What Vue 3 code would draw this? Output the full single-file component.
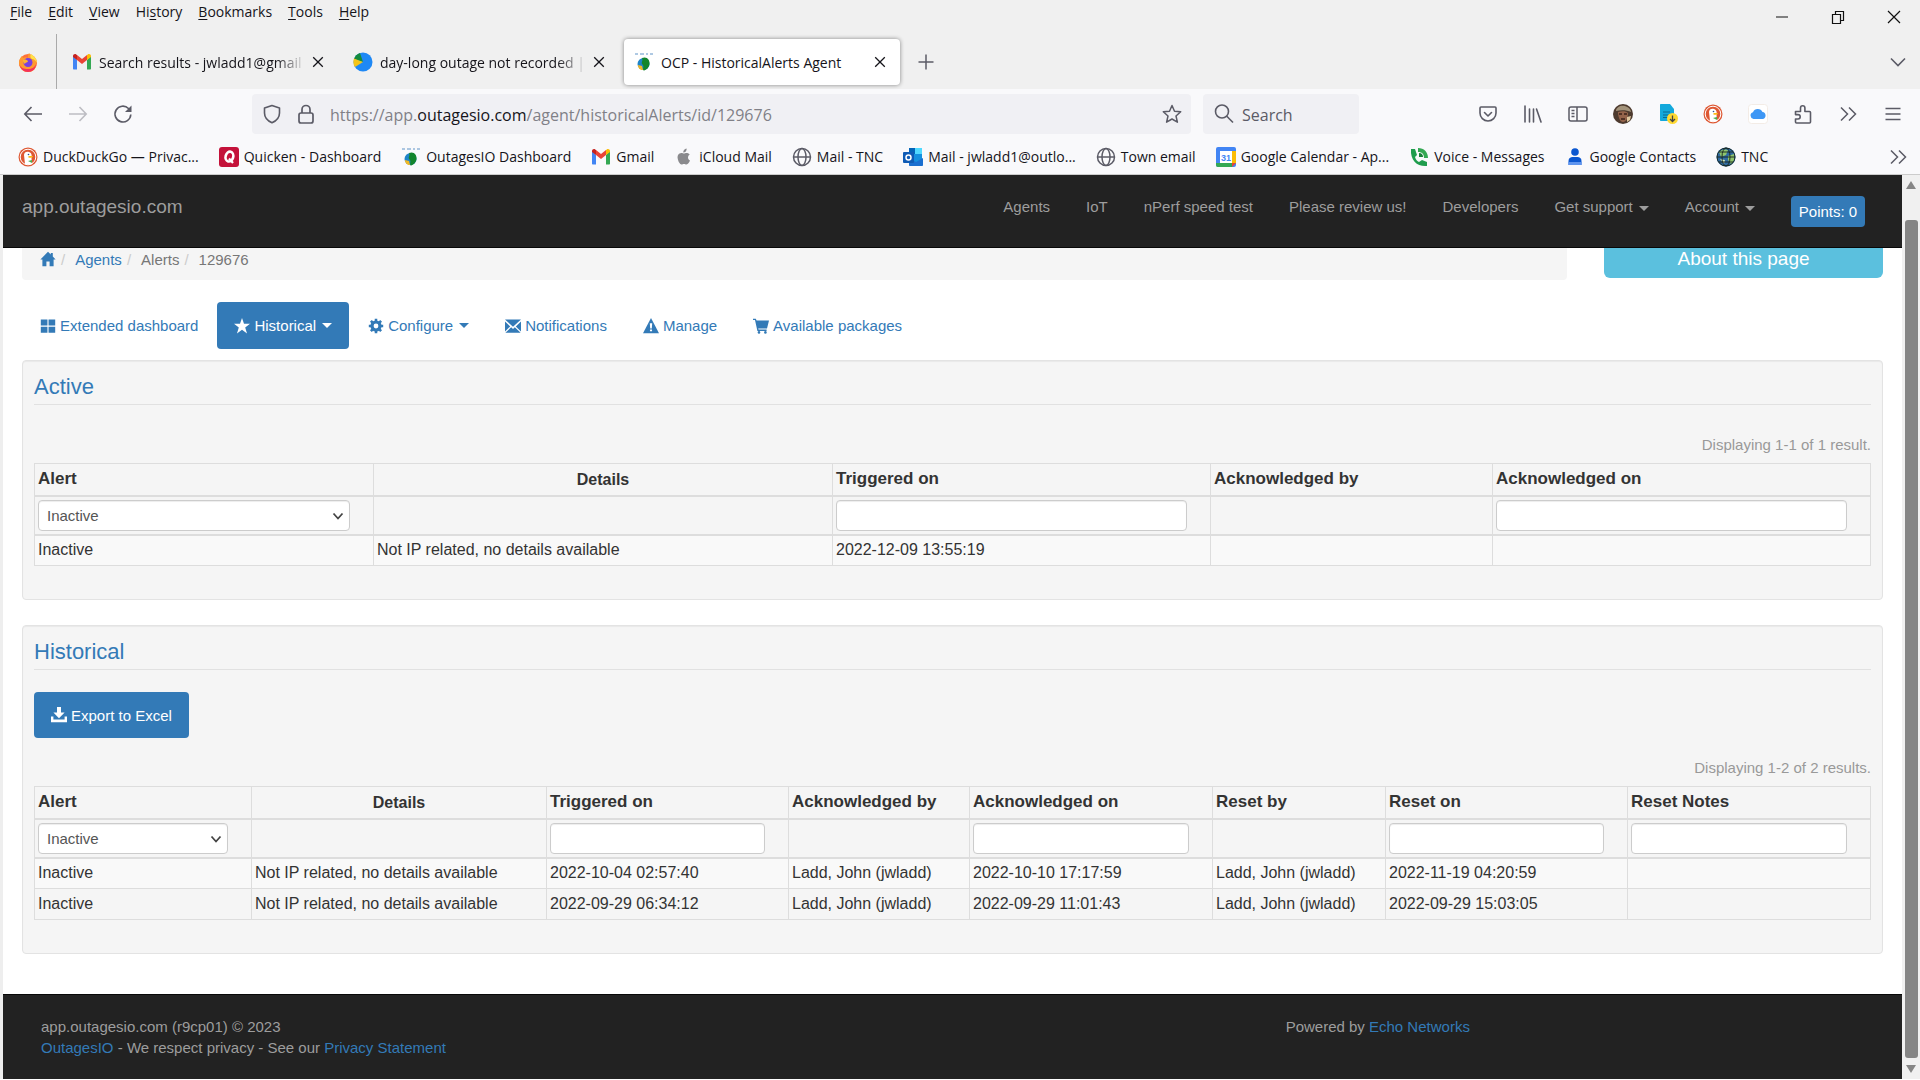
<script setup>
import { ref } from 'vue'

const menus = [
  ['', 'F', 'ile'], ['', 'E', 'dit'], ['', 'V', 'iew'], ['Hi', 's', 'tory'],
  ['', 'B', 'ookmarks'], ['', 'T', 'ools'], ['', 'H', 'elp'],
]

const art = {
  firefox: '<circle cx="10" cy="11" r="9" fill="#ff7139"/><path d="M11 1c1 2 4 3 6 6 3 5 1 13-7 13C4 20 1 15 1 11c0-3 1-5 3-7l1 2c2-1 4-1 5 0 0-2 0-3 1-5z" fill="#ff9a2e"/><path d="M13 2c3 2 6 5 6 9-1-2-3-4-5-4-2-1-2-3-1-5z" fill="#ffe14a"/><path d="M1 11c1 5 5 6 9 6s7-2 8-5c0 5-4 8-8 8s-8-3-9-9z" fill="#f5325b"/><circle cx="10" cy="10.500" r="4.500" fill="#7a3fe0"/><path d="M5 8c2-1 4 0 5 1 0 2-3 1-3 3-2-1-2-3-2-4z" fill="#ffb32e"/>',
  gmail: '<path d="M1 3.500v13c0 .6.400 1 1 1h3V8z" fill="#4285f4"/><path d="M19 3.500v13c0 .6-.400 1-1 1h-3V8z" fill="#34a853"/><path d="M15 8l4-3V4c0-1.800-2-2.600-3.200-1.600L15 3z" fill="#fbbc04"/><path d="M1 5l4 3V3l-.8-.6C3 1.400 1 2.200 1 4z" fill="#c5221f"/><path d="M5 3l5 4 5-4v5l-5 4-5-4z" fill="#ea4335"/>',
  pie: '<circle cx="10" cy="10" r="9.500" fill="#1e88f5"/><path d="M10 10L7 1a9.500 9.500 0 0 0-6 6z" fill="#138a3c"/><path d="M10 10L1 6.500a9.500 9.500 0 0 0 1 8.500z" fill="#f5c518"/>',
  outage: '<path d="M1 2h3M6 2h4M12 2h2M16 2h3" stroke="#5f93c7" stroke-width="1"/><circle cx="9.500" cy="12" r="6" fill="#1d84c9"/><path d="M8 6c5-2 8 2 7.500 6-.5 4-4 6.500-6 6.500-1-3 1-4-1-6s1-4-.5-6.500z" fill="#12852c"/><path d="M4 13l4 1 1 4c-3 0-5-2-5-5z" fill="#f2b824"/>',
  duck: '<circle cx="10" cy="10" r="9.500" fill="#de5833"/><circle cx="10" cy="10" r="7.800" fill="none" stroke="#fff" stroke-width="1"/><path d="M7 17L6 8c0-3 3-4 5-3 3 1 3 4 2.500 7l1 5c-2 1-5 1-7.500 0z" fill="#fff"/><path d="M10.500 9h4.500c0 1.500-2 2-4.500 1.800z" fill="#fdb913"/><circle cx="10.500" cy="7.500" r=".8" fill="#2d4f8e"/><path d="M10 14l4-1v3z" fill="#4caf50"/>',
  quicken: '<rect width="20" height="20" rx="3" fill="#c4123a"/><ellipse cx="10.300" cy="9.500" rx="3.800" ry="5" fill="none" stroke="#fff" stroke-width="2.600" transform="rotate(15 10 10)"/><path d="M10 11.500l4 4.500" stroke="#fff" stroke-width="2.200"/>',
  apple: '<path d="M14 10.500c0-2 1.600-3 1.700-3.100-1-1.400-2.500-1.500-3-1.500-1.200 0-2.200.7-2.800.7s-1.500-.7-2.500-.7C4.500 6 3.200 8.500 3.700 11.500c.4 2.800 2.200 6 3.900 6 .8 0 1.300-.5 2.400-.5s1.500.5 2.400.5c1.700 0 3-2.500 3.600-4-1.300-.5-2-1.700-2-3zM11.800 4.500c.6-.8 1-1.800.8-2.900-1 .1-2 .7-2.500 1.400-.6.700-1 1.700-.8 2.600 1 0 1.900-.4 2.500-1.100z" fill="#8a8a8d"/>',
  globe: '<g fill="none" stroke="#5b5b66" stroke-width="1.500"><circle cx="10" cy="10" r="8.500"/><ellipse cx="10" cy="10" rx="4" ry="8.500"/><path d="M1.500 10h17"/></g>',
  outlook: '<rect x="6" y="1" width="13" height="17" rx="1" fill="#1490df"/><path d="M12 1h7v6h-7z" fill="#50d9ff"/><path d="M6 11l7 4 7-4v7c0 .6-.4 1-1 1H7c-.6 0-1-.4-1-1z" fill="#1a6fd0"/><path d="M6 1h6v6H6z" fill="#0364b8"/><rect y="5" width="11" height="11" rx="1" fill="#0f5bb5"/><circle cx="5.500" cy="10.500" r="2.500" fill="none" stroke="#fff" stroke-width="1.500"/>',
  calendar: '<rect width="20" height="20" rx="2" fill="#4285f4"/><path d="M16 4h4v12h-4z" fill="#fbbc04"/><path d="M4 16h12v4H2a2 2 0 0 1-2-2v-2z" fill="#34a853"/><path d="M16 16h4l-4 4z" fill="#ea4335"/><path d="M4 4h12v12H4z" fill="#fff"/><text x="10" y="13.500" font-size="9" font-weight="700" text-anchor="middle" fill="#4285f4" font-family="Liberation Sans, sans-serif">31</text>',
  voice: '<path d="M2 2h4l2 6-2 2c1 3 2 4 4 5l3-2 5 2v4c-9 1-17-5-16-17z" fill="#1f9d4d"/><path d="M9 1c6 0 10 4 10 10h-4c0-4-2-6-6-6z" fill="#34a853"/><path d="M10 6c3 0 4 2 4 4h-4z" fill="#188038"/>',
  contact: '<circle cx="10" cy="5" r="3.800" fill="#0b57d0"/><path d="M3.500 18v-4c0-3 2-4 4-4h5c2 0 4 1 4 4v4z" fill="#0b57d0"/><path d="M3.500 15h13v3h-13z" fill="#5e94ee"/>',
  tnc: '<circle cx="10" cy="10" r="9.500" fill="#2f6aa0"/><path d="M3 5c3-3 7-3 9-2l-2 5-5 2zM12 9l6-2c1 4 0 8-3 10l-3-4z" fill="#8fc46c"/><path d="M4 12l5 1-1 4z" fill="#cfe3bb"/><g fill="none" stroke="#16251e" stroke-width=".9"><circle cx="10" cy="10" r="9"/><ellipse cx="10" cy="10" rx="4" ry="9"/><path d="M1 10h18M3 5h14M3 15h14"/></g>',
  pocket: '<g fill="none" stroke="#5b5b66" stroke-width="1.600" stroke-linecap="round" stroke-linejoin="round"><path d="M3 3h14c.6 0 1 .4 1 1v5a8 8 0 0 1-16 0V4c0-.6.400-1 1-1z"/><path d="M6.500 8.500L10 12l3.500-3.500"/></g>',
  library: '<path d="M2 2v16M6.500 5v13M10.500 5v13M13.500 5l4.500 13" fill="none" stroke="#5b5b66" stroke-width="1.600" stroke-linecap="round"/>',
  sidebar: '<g fill="none" stroke="#5b5b66" stroke-width="1.500"><rect x="1" y="3" width="18" height="14" rx="2"/><path d="M9 3v14M3.500 6.500h3M3.500 9.500h3M3.500 12.500h3"/></g>',
  avatar: '<circle cx="10" cy="10" r="10" fill="#4d3a2e"/><path d="M3 7c0-4 5-6 9-5 3 1 6 3 6 6-4-2-10-2-15-1z" fill="#a3937a"/><path d="M5 8c4-1 8-1 10 1 0 5-2 9-5 9s-5-5-5-10z" fill="#94634a"/><path d="M6 10h3M11 10h3M8 15h4" stroke="#3b2219" stroke-width="1.500"/><path d="M14 13l4-1-1 4-3 2z" fill="#e0c9a0"/>',
  doc: '<path d="M3 0h9l4 5v12H3c-.6 0-1-.4-1-1V1c0-.6.400-1 1-1z" fill="#13a9dc"/><path d="M5 8h7M5 11h6M5 13.500h5" stroke="#0a6a91" stroke-width="1.200"/><circle cx="14.500" cy="14.500" r="5.500" fill="#ffd932"/><path d="M14.500 11.500v6M12 15l2.500 2.500L17 15" fill="none" stroke="#444" stroke-width="1.300"/>',
  cloud: '<rect x=".5" y=".5" width="19" height="19" rx="3" fill="#fff" stroke="#f3ece6"/><path d="M5.500 15a3.500 3.500 0 0 1-.5-6.800A5.200 5.200 0 0 1 14.500 8a3.600 3.600 0 0 1 .5 7z" fill="#3e97f5"/>',
  puzzle: '<path d="M2.500 7.500h5V4a2.200 2.200 0 0 1 4.400 0v3.500h4.600c.6 0 1 .4 1 1V18c0 .6-.4 1-1 1h-13c-.6 0-1-.4-1-1v-3H5a2.200 2.200 0 0 0 0-4.400H2.500V8z" fill="none" stroke="#5b5b66" stroke-width="1.600" stroke-linejoin="round"/>',
  more: '<path d="M3 3.500l6.500 6.500L3 16.500M11 3.500l6.500 6.500-6.500 6.500" fill="none" stroke="#5b5b66" stroke-width="1.500"/>',
  burger: '<path d="M2.500 4.500h15M2.500 10h15M2.500 15.500h15" stroke="#5b5b66" stroke-width="1.600"/>',
  back: '<path d="M19 10H2M8.500 3L1.800 10l6.700 7" fill="none" stroke="#5b5b66" stroke-width="1.600"/>',
  forward: '<path d="M1 10h17M11.500 3l6.700 7-6.700 7" fill="none" stroke="#bdbdc3" stroke-width="1.600"/>',
  reload: '<path d="M17.800 10.500A7.900 7.900 0 1 1 15.500 4.500l1.500 1.700" fill="none" stroke="#5b5b66" stroke-width="1.600"/><path d="M18.500 1.500V8h-6.500z" fill="#5b5b66"/>',
  shield: '<path d="M10 1.500L17.500 4v5c0 4.500-3 7.800-7.500 9.800C5.500 16.800 2.500 13.500 2.500 9V4z" fill="none" stroke="#5b5b66" stroke-width="1.600" stroke-linejoin="round"/>',
  lock: '<g fill="none" stroke="#5b5b66" stroke-width="1.700"><rect x="3" y="9" width="14" height="10" rx="2"/><path d="M6 9V5.500a4 4 0 0 1 8 0V9"/></g>',
  star: '<path d="M10 1.500l2.500 5.700 6.200.6-4.700 4.200 1.400 6.200-5.400-3.200-5.400 3.200L6 12 1.300 7.800l6.200-.6z" fill="none" stroke="#5b5b66" stroke-width="1.500" stroke-linejoin="round"/>',
  search: '<g fill="none" stroke="#5b5b66" stroke-width="1.600"><circle cx="8" cy="7.500" r="6.500"/><path d="M12.800 12.300L19 18.500"/></g>',
  close: '<path d="M4 4l12 12M16 4L4 16" stroke="#15141a" stroke-width="1.600"/>',
  plus: '<path d="M10 2.500v15M2.500 10h15" stroke="#5b5b66" stroke-width="1.500"/>',
  down: '<path d="M3 6.500l7 7 7-7" fill="none" stroke="#5b5b66" stroke-width="1.600"/>',
  min: '<path d="M4 10h12" stroke="#111" stroke-width="1"/>',
  restore: '<path d="M4.500 7.500h8v9h-8zM7.500 7.500v-3h8v9h-3" fill="none" stroke="#111" stroke-width="1.200"/>',
  winclose: '<path d="M4 4l12 12M16 4L4 16" stroke="#111" stroke-width="1.200"/>',
  home: '<path d="M10 1L0.500 10.500H3V19h5v-6h4v6h5v-8.500h2.500L16 7V2.500h-2.500v2z" fill="currentColor"/>',
  grid: '<path d="M1 2h8.300v7.500H1zM10.700 2H19v7.500h-8.300zM1 11h8.300v7.500H1zM10.700 11H19v7.500h-8.300z" fill="currentColor"/>',
  fullstar: '<path d="M10 0l2.500 7.200H20l-6 4.600 2.300 7.500L10 14.800l-6.300 4.500L6 11.800 0 7.200h7.500z" fill="currentColor"/>',
  gear: '<circle cx="10" cy="10" r="5" fill="none" stroke="currentColor" stroke-width="4"/><path d="M10 1v4M10 15v4M1 10h4M15 10h4M3.600 3.600l3 3M13.400 13.400l3 3M3.600 16.400l3-3M13.400 6.600l3-3" stroke="currentColor" stroke-width="3.200"/>',
  mail: '<path d="M0 2h20L10 11zM0 4.500L6.500 10.500 0 17zM20 4.500V17l-6.500-6.500zM7.700 11.700L10 13.800l2.300-2.100L19.500 18.500H.5z" fill="currentColor"/>',
  warn: '<path d="M10 0l10 19H0z" fill="currentColor"/><path d="M8.500 6.500h3l-.5 6.500H9zM8.700 14.500h2.600v2.200H8.700z" fill="#fff"/>',
  cart: '<path d="M0 1h3.500l1 2H20l-2.500 10H6.500l.4 1.500H17v1.600H5.500L2.500 2.600H0z" fill="currentColor"/><circle cx="7.500" cy="18" r="1.600" fill="currentColor"/><circle cx="15.500" cy="18" r="1.600" fill="currentColor"/>',
  save: '<path d="M7.500 0h5v7H17l-7 7-7-7h4.500z" fill="currentColor"/><path d="M0 12h3v3.500h14V12h3v7H0z" fill="currentColor"/>',
}

const bookmarks = [
  ['duck', 'DuckDuckGo — Privac...'], ['quicken', 'Quicken - Dashboard'], ['outage', 'OutagesIO Dashboard'],
  ['gmail', 'Gmail'], ['apple', 'iCloud Mail'], ['globe', 'Mail - TNC'], ['outlook', 'Mail - jwladd1@outlo...'],
  ['globe', 'Town email'], ['calendar', 'Google Calendar - Ap...'], ['voice', 'Voice - Messages'],
  ['contact', 'Google Contacts'], ['tnc', 'TNC'],
]
const tools = [
  ['pocket', 'Save to Pocket'], ['library', 'Library'], ['sidebar', 'Sidebars'], ['avatar', 'Account'],
  ['doc', 'Download document'], ['duck', 'DuckDuckGo'], ['cloud', 'iCloud'], ['puzzle', 'Extensions'],
  ['more', 'More tools'], ['burger', 'Application menu'],
]
const tabs = [
  { icon: 'gmail', title: 'Search results - jwladd1@gmail', faded: true },
  { icon: 'pie', title: 'day-long outage not recorded |', faded: true },
  { icon: 'outage', title: 'OCP - HistoricalAlerts Agent', active: true },
]
const nav = [
  ['Agents'], ['IoT'], ['nPerf speed test'], ['Please review us!'], ['Developers'], ['Get support', true], ['Account', true],
]
const pills = [
  { icon: 'grid', text: 'Extended dashboard' },
  { icon: 'fullstar', text: 'Historical', caret: true, active: true },
  { icon: 'gear', text: 'Configure', caret: true },
  { icon: 'mail', text: 'Notifications' },
  { icon: 'warn', text: 'Manage' },
  { icon: 'cart', text: 'Available packages' },
]
const none = 'Not IP related, no details available'
const who = 'Ladd, John (jwladd)'
const panels = [
  {
    id: 'active', title: 'Active', summary: 'Displaying 1-1 of 1 result.', filter: ref('Inactive'),
    columns: [
      { name: 'Alert', share: 339, kind: 'select' }, { name: 'Details', share: 459, plain: true },
      { name: 'Triggered on', share: 378, kind: 'text' }, { name: 'Acknowledged by', share: 282 },
      { name: 'Acknowledged on', share: 378, kind: 'text' },
    ],
    rows: [['Inactive', none, '2022-12-09 13:55:19', '', '']],
  },
  {
    id: 'historical', title: 'Historical', summary: 'Displaying 1-2 of 2 results.', exportable: true, filter: ref('Inactive'),
    columns: [
      { name: 'Alert', share: 217, kind: 'select' }, { name: 'Details', share: 295, plain: true },
      { name: 'Triggered on', share: 242, kind: 'text' }, { name: 'Acknowledged by', share: 181 },
      { name: 'Acknowledged on', share: 243, kind: 'text' }, { name: 'Reset by', share: 173 },
      { name: 'Reset on', share: 242, kind: 'text' }, { name: 'Reset Notes', share: 243, kind: 'text' },
    ],
    rows: [
      ['Inactive', none, '2022-10-04 02:57:40', who, '2022-10-10 17:17:59', who, '2022-11-19 04:20:59', ''],
      ['Inactive', none, '2022-09-29 06:34:12', who, '2022-09-29 11:01:43', who, '2022-09-29 15:03:05', ''],
    ],
  },
]
const share = (panel, col) => (col.share / panel.columns.reduce((sum, c) => sum + c.share, 0)) * 100 + '%'
</script>

<template>
  <div class="window">
    <header class="chrome">
      <div class="strip">
        <div class="titlebar">
          <nav class="menus">
            <button v-for="m in menus" :key="m.join('')" type="button">{{ m[0] }}<u>{{ m[1] }}</u>{{ m[2] }}</button>
          </nav>
          <div class="wincontrols">
            <button v-for="c in ['min', 'restore', 'winclose']" :key="c" type="button" :aria-label="c">
              <svg class="ico" viewBox="0 0 20 20" v-html="art[c]" />
            </button>
          </div>
        </div>
        <div class="tabs">
          <button class="pinned" type="button" aria-label="Firefox View"><svg class="ico" viewBox="0 0 20 20" v-html="art.firefox" /></button>
          <div v-for="t in tabs" :key="t.title" class="tab" :class="{ active: t.active }">
            <svg class="ico" viewBox="0 0 20 20" v-html="art[t.icon]" />
            <span class="tabtitle" :class="{ faded: t.faded }">{{ t.title }}</span>
            <button type="button" aria-label="Close tab"><svg class="ico small" viewBox="0 0 20 20" v-html="art.close" /></button>
          </div>
          <button class="newtab" type="button" aria-label="New tab"><svg class="ico" viewBox="0 0 20 20" v-html="art.plus" /></button>
          <button class="alltabs" type="button" aria-label="List all tabs"><svg class="ico" viewBox="0 0 20 20" v-html="art.down" /></button>
        </div>
      </div>
      <div class="toolbar">
        <div class="history">
          <button v-for="b in ['back', 'forward', 'reload']" :key="b" type="button" :aria-label="b"><svg class="ico" viewBox="0 0 20 20" v-html="art[b]" /></button>
        </div>
        <div class="urlbox">
          <svg class="ico" viewBox="0 0 20 20" v-html="art.shield" />
          <svg class="ico" viewBox="0 0 20 20" v-html="art.lock" />
          <div class="url" role="textbox" aria-label="Address" contenteditable="true" spellcheck="false">https://app.<b>outagesio.com</b>/agent/historicalAlerts/id/129676</div>
          <button type="button" aria-label="Bookmark this page"><svg class="ico" viewBox="0 0 20 20" v-html="art.star" /></button>
        </div>
        <label class="searchbox">
          <svg class="ico" viewBox="0 0 20 20" v-html="art.search" />
          <input type="text" placeholder="Search" aria-label="Search">
        </label>
        <div class="tools">
          <button v-for="t in tools" :key="t[1]" type="button" :aria-label="t[1]"><svg class="ico" viewBox="0 0 20 20" v-html="art[t[0]]" /></button>
        </div>
      </div>
      <nav class="bookmarks">
        <a v-for="b in bookmarks" :key="b[1]" href="#"><svg class="ico" viewBox="0 0 20 20" v-html="art[b[0]]" />{{ b[1] }}</a>
        <button type="button" aria-label="More bookmarks"><svg class="ico" viewBox="0 0 20 20" v-html="art.more" /></button>
      </nav>
    </header>

    <div class="viewport">
      <div class="page">
        <nav class="navbar">
          <a class="brand" href="#">app.outagesio.com</a>
          <div class="navlinks">
            <a v-for="n in nav" :key="n[0]" href="#">{{ n[0] }}<i v-if="n[1]" class="caret" /></a>
            <button class="points" type="button">Points: 0</button>
          </div>
        </nav>

        <main class="content">
          <div class="toprow">
            <ol class="crumbs">
              <li><a href="#" aria-label="Home"><svg class="glyph" viewBox="0 0 20 20" v-html="art.home" /></a></li>
              <li><a href="#">Agents</a></li>
              <li>Alerts</li>
              <li>129676</li>
            </ol>
            <button class="about" type="button">About this page</button>
          </div>

          <nav class="pills">
            <a v-for="p in pills" :key="p.text" href="#" :class="{ active: p.active }">
              <svg class="glyph" viewBox="0 0 20 20" v-html="art[p.icon]" />{{ p.text }}<i v-if="p.caret" class="caret" />
            </a>
          </nav>

          <section v-for="panel in panels" :key="panel.id" class="panel">
            <h2>{{ panel.title }}</h2>
            <button v-if="panel.exportable" class="export" type="button"><svg class="glyph" viewBox="0 0 20 20" v-html="art.save" />Export to Excel</button>
            <p class="summary" :class="{ below: panel.exportable }">{{ panel.summary }}</p>
            <table>
              <colgroup><col v-for="c in panel.columns" :key="c.name" :style="{ width: share(panel, c) }"></colgroup>
              <thead>
                <tr>
                  <th v-for="c in panel.columns" :key="c.name" scope="col" :class="{ plain: c.plain }">{{ c.name }}</th>
                </tr>
                <tr class="filters">
                  <td v-for="c in panel.columns" :key="c.name">
                    <div v-if="c.kind === 'select'" class="pick">
                      <select v-model="panel.filter.value" :aria-label="c.name"><option>Inactive</option></select>
                      <svg viewBox="0 0 12 12"><path d="M1.500 3.500L6 8.500l4.500-5" fill="none" stroke="#444" stroke-width="1.800" /></svg>
                    </div>
                    <input v-else-if="c.kind" type="text" :aria-label="c.name">
                  </td>
                </tr>
              </thead>
              <tbody>
                <tr v-for="(row, i) in panel.rows" :key="i">
                  <td v-for="(cell, j) in row" :key="j">{{ cell }}</td>
                </tr>
              </tbody>
            </table>
          </section>
        </main>

        <footer class="footer">
          <div class="legal">
            app.outagesio.com (r9cp01) © 2023<br>
            <a href="#">OutagesIO</a> - We respect privacy - See our <a href="#">Privacy Statement</a>
          </div>
          <div class="powered">Powered by <a href="#">Echo Networks</a></div>
        </footer>
      </div>
      <div class="scrollbar"><i class="up" /><div class="thumb" /><i class="dn" /></div>
    </div>
  </div>
</template>

<style>
body { margin: 0; background: #fff; }
</style>

<style scoped>
.window { display: flex; flex-direction: column; min-height: 100vh; box-sizing: border-box; padding-bottom: 1px; font-family: "Liberation Sans", Arial, sans-serif; }
.window * { box-sizing: border-box; }
button { border: 0; background: none; padding: 0; margin: 0; font: inherit; color: inherit; cursor: pointer; }
a { text-decoration: none; color: #337ab7; }
.ico { width: 20px; height: 20px; display: block; flex: none; }
.ico.small { width: 16px; height: 16px; }
.glyph { width: 16px; height: 16px; margin-right: 4px; flex: none; }
.caret { display: inline-block; border: 5px solid transparent; border-top-color: currentColor; border-bottom: 0; margin-left: 6px; vertical-align: middle; }

.chrome { font-family: "Open Sans", "Noto Sans", sans-serif; font-size: 14px; color: #15141a; background: #f9f9fb; border-bottom: 1px solid #ccc; }
.strip { background: #f0f0f0; }
.titlebar { display: flex; justify-content: space-between; height: 24px; }
.menus { display: flex; gap: 16px; padding-left: 10px; line-height: 24px; }
.menus u { text-underline-offset: 2px; }
.wincontrols { display: flex; gap: 36px; padding: 7px 16px 0 0; }
.tabs { display: flex; align-items: center; height: 65px; padding: 10px 12px 0 18px; }
.pinned { align-self: stretch; padding-right: 18px; border-right: 1px solid #aaa; display: flex; align-items: center; }
.tab { display: flex; align-items: center; width: 276px; height: 46px; padding: 0 8px 0 10px; margin-left: 5px; border-radius: 4px; }
.tab.active { background: #fff; box-shadow: 0 0 4px rgba(0, 0, 0, .45); }
.tabtitle { flex: 1; min-width: 0; padding: 2px 0 0 7px; white-space: nowrap; }
.faded { mask-image: linear-gradient(to left, transparent, #000 30px); }
.tab button { padding: 0 4px; }
.newtab { margin-left: 16px; }
.alltabs { margin-left: auto; }
.toolbar { display: flex; align-items: center; height: 50px; padding: 0 17px 0 23px; }
.history { display: flex; gap: 25px; margin-right: 119px; }
.urlbox { flex: 1; display: flex; align-items: center; height: 40px; padding: 0 9px 0 10px; gap: 14px; background: #f0f0f4; border-radius: 4px; }
.url { flex: 1; padding-top: 2px; font-size: 16px; color: #808087; white-space: nowrap; outline: 0; }
.url b { font-weight: 400; color: #15141a; }
.searchbox { display: flex; align-items: center; width: 156px; height: 40px; padding: 0 11px; gap: 8px; margin: 0 119px 0 12px; background: #f0f0f4; border-radius: 4px; }
.searchbox input { width: 100%; min-width: 0; border: 0; padding: 2px 0 0; background: none; font: inherit; font-size: 16px; outline: 0; }
.searchbox input::placeholder { color: #5b5b66; opacity: 1; }
.tools { display: flex; gap: 25px; }
.bookmarks { display: flex; align-items: center; gap: 20px; height: 35px; padding: 0 12px 0 18px; white-space: nowrap; }
.bookmarks a { display: flex; align-items: center; gap: 5px; color: inherit; }
.bookmarks button { margin-left: auto; }

.viewport { flex: 1; display: flex; }
.page { flex: 1; min-width: 0; display: flex; flex-direction: column; border-left: 3px solid #eee; background: #fff; font-size: 15px; color: #333; }
.navbar { display: flex; justify-content: space-between; height: 73px; padding: 0 37px 0 19px; background: #222; border-bottom: 1px solid #080808; line-height: 20px; }
.navbar a { color: #9d9d9d; padding-top: 22px; }
.navbar .brand { font-size: 19px; }
.navlinks { display: flex; gap: 36px; align-items: flex-start; }
.points { margin-top: 21px; width: 74px; height: 31px; border-radius: 4px; background: #337ab7; color: #fff; }
.content { flex: 1; padding: 0 19px 40px; }
.toprow { display: flex; gap: 37px; align-items: flex-start; }
.crumbs { flex: 1; display: flex; align-items: center; height: 32px; margin: 0; padding: 0 18px 10px; list-style: none; background: #f5f5f5; border-radius: 0 0 4px 4px; color: #777; }
.crumbs li { display: flex; align-items: center; }
.crumbs li + li::before { content: "/"; color: #ccc; padding: 0 10px 0 5px; }
.crumbs .glyph { display: block; margin: 0; }
.about { width: 279px; height: 30px; padding-bottom: 8px; border-radius: 0 0 6px 6px; background: #5bc0de; color: #fff; font-size: 19px; }
.pills { display: flex; gap: 2px; margin: 22px 0 11px; padding-left: 1px; }
.pills a { display: flex; align-items: center; height: 47px; padding: 0 17px; border-radius: 4px; }
.pills a.active { background: #337ab7; color: #fff; }
.panel { padding: 12px 11px 33px; border: 1px solid #e3e3e3; border-radius: 4px; background: #f5f5f5; box-shadow: inset 0 1px 1px rgba(0, 0, 0, .05); }
.panel + .panel { margin-top: 25px; }
h2 { margin: 0; height: 32px; line-height: 28px; font-size: 22px; font-weight: 400; color: #337ab7; border-bottom: 1px solid #e1e1e1; }
.export { display: flex; align-items: center; height: 46px; margin-top: 22px; padding: 0 17px; border-radius: 4px; background: #337ab7; color: #fff; }
.summary { margin: 30px 0 8px; line-height: 20px; text-align: right; color: #999; }
.summary.below { margin-top: 20px; }
table { width: 100%; table-layout: fixed; border-collapse: collapse; font-size: 16px; }
th, td { border: 1px solid #ddd; padding: 0 3px; text-align: left; white-space: nowrap; }
th { height: 32px; font-size: 17px; border-bottom-width: 2px; }
th.plain { padding-top: 2px; font-size: 16px; text-align: center; }
.filters td { height: 39px; border-bottom-width: 2px; }
tbody td { height: 31px; }
tbody tr:nth-child(odd) { background: #f9f9f9; }
.filters input, .pick { width: calc(100% - 20px); height: 31px; display: block; }
.filters input, .pick select { border: 1px solid #ccc; border-radius: 4px; background: #fff; font: inherit; font-size: 15px; color: #555; padding: 0 8px; box-shadow: inset 0 1px 1px rgba(0, 0, 0, .075); }
.pick { position: relative; }
.pick select { appearance: none; width: 100%; height: 100%; }
.pick svg { position: absolute; right: 6px; top: 10px; width: 12px; height: 12px; pointer-events: none; }
.footer { display: flex; gap: 5px; height: 85px; padding: 21px 38px; background: #222; border-top: 1px solid #080808; color: #9d9d9d; line-height: 21px; }
.legal { flex: none; width: 68%; }
.scrollbar { width: 18px; display: flex; flex-direction: column; align-items: center; padding: 6px 0; background: #f0f0f0; }
.scrollbar i { border: 5px solid transparent; }
.scrollbar .up { border-top: 0; border-bottom: 8px solid #858585; }
.scrollbar .dn { border-bottom: 0; border-top: 8px solid #858585; }
.thumb { flex: 1; width: 13px; margin: 31px 0 7px; border-radius: 3px; background: #858585; }
</style>
